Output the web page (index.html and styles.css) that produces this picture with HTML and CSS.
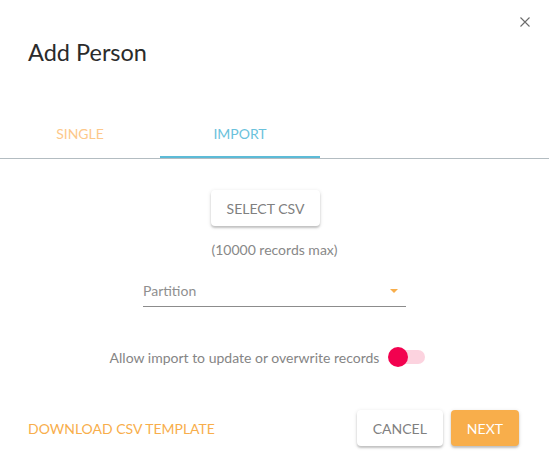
FILE: index.html
```html
<!DOCTYPE html>
<html>
<head>
<meta charset="utf-8">
<link rel="stylesheet" href="styles.css">
</head>
<body>
<div class="dialog">
  <button class="close" aria-label="Close">
    <svg width="10" height="10" viewBox="0 0 10 10"><path d="M0.5 0.5L9.5 9.5M9.5 0.5L0.5 9.5" stroke="#6b6b6b" stroke-width="1.1" fill="none"/></svg>
  </button>
  <h1 class="title">Add Person</h1>
  <div class="tabs">
    <div class="tab tab-single">SINGLE</div>
    <div class="tab tab-import">IMPORT</div>
  </div>
  <div class="content">
    <button class="btn btn-raised select-btn">SELECT CSV</button>
    <div class="hint">(10000 records max)</div>
    <div class="field">
      <span class="field-label">Partition</span>
      <span class="arrow"></span>
    </div>
    <div class="toggle-row">
      <span class="toggle-label">Allow import to update or overwrite records</span>
      <span class="switch"><span class="track"></span><span class="thumb"></span></span>
    </div>
  </div>
  <div class="footer">
    <a class="download">DOWNLOAD CSV TEMPLATE</a>
    <div class="actions">
      <button class="btn btn-raised">CANCEL</button>
      <button class="btn btn-raised btn-primary">NEXT</button>
    </div>
  </div>
</div>
</body>
</html>
```

FILE: styles.css
```css
html, body {
  margin: 0;
  padding: 0;
  background: #ffffff;
}
body {
  font-family: Lato, "Open Sans", sans-serif;
  width: 549px;
  height: 464px;
  overflow: hidden;
}
.dialog {
  position: relative;
  width: 549px;
  height: 464px;
  display: flex;
  flex-direction: column;
}
.close {
  position: absolute;
  top: 17px;
  right: 19px;
  width: 10px;
  height: 10px;
  padding: 0;
  border: 0;
  background: transparent;
  display: flex;
}
.title {
  margin: 0;
  padding: 36px 28px 0;
  font-size: 23.5px;
  line-height: 32px;
  font-weight: 400;
  color: #2b2b2b;
}
.tabs {
  margin-top: 42px;
  display: flex;
  border-bottom: 1px solid #b3bcc1;
}
.tab {
  width: 160px;
  height: 46px;
  padding-bottom: 2px;
  display: flex;
  align-items: center;
  justify-content: center;
  font-size: 14px;
}
.tab-single {
  color: #fdc88a;
}
.tab-import {
  color: #6bc2dc;
  height: 46px;
  border-bottom: 2px solid #5cbbd7;
  padding-bottom: 0;
  margin-bottom: -1px;
}
.content {
  display: flex;
  flex-direction: column;
  align-items: center;
  padding-top: 31px;
}
.btn {
  font-family: Lato, "Open Sans", sans-serif;
  font-size: 14px;
  height: 36px;
  padding: 0 16px;
  border: 0;
  border-radius: 4px;
  background: #ffffff;
  color: #808080;
  cursor: pointer;
}
.btn-raised {
  box-shadow: 0 2px 2px rgba(0,0,0,0.18), 0 1px 4px rgba(0,0,0,0.12);
}
.btn-primary {
  background: #f8ae4b;
  color: #ffffff;
}
.select-btn {
  margin-right: 18px;
}
.hint {
  margin-top: 15px;
  font-size: 14px;
  line-height: 18px;
  color: #888888;
}
.field {
  margin-top: 16px;
  width: 255px;
  height: 31px;
  border-bottom: 1px solid #8c8c8c;
  display: flex;
  align-items: center;
  justify-content: space-between;
  padding-right: 8px;
}
.field-label {
  font-size: 14px;
  color: #8f8f8f;
}
.arrow {
  width: 0;
  height: 0;
  border-left: 4px solid transparent;
  border-right: 4px solid transparent;
  border-top: 4px solid #f8ae4b;
  margin-top: 1px;
}
.toggle-row {
  margin-top: 40px;
  display: flex;
  align-items: center;
  height: 20px;
  margin-right: 14px;
}
.toggle-label {
  font-size: 14px;
  color: #858585;
  margin-right: 9px;
}
.switch {
  position: relative;
  width: 37px;
  height: 20px;
  display: inline-block;
}
.track {
  position: absolute;
  left: 3px;
  top: 3px;
  width: 34px;
  height: 14px;
  border-radius: 7px;
  background: #fcd3df;
}
.thumb {
  position: absolute;
  left: 0;
  top: 0;
  width: 20px;
  height: 20px;
  border-radius: 50%;
  background: #f2024f;
}
.footer {
  margin-top: 43px;
  display: flex;
  align-items: center;
  justify-content: space-between;
  padding: 0 30px 0 28px;
}
.download {
  font-size: 14px;
  color: #f8ae4b;
}
.actions {
  display: flex;
  gap: 8px;
}
```
